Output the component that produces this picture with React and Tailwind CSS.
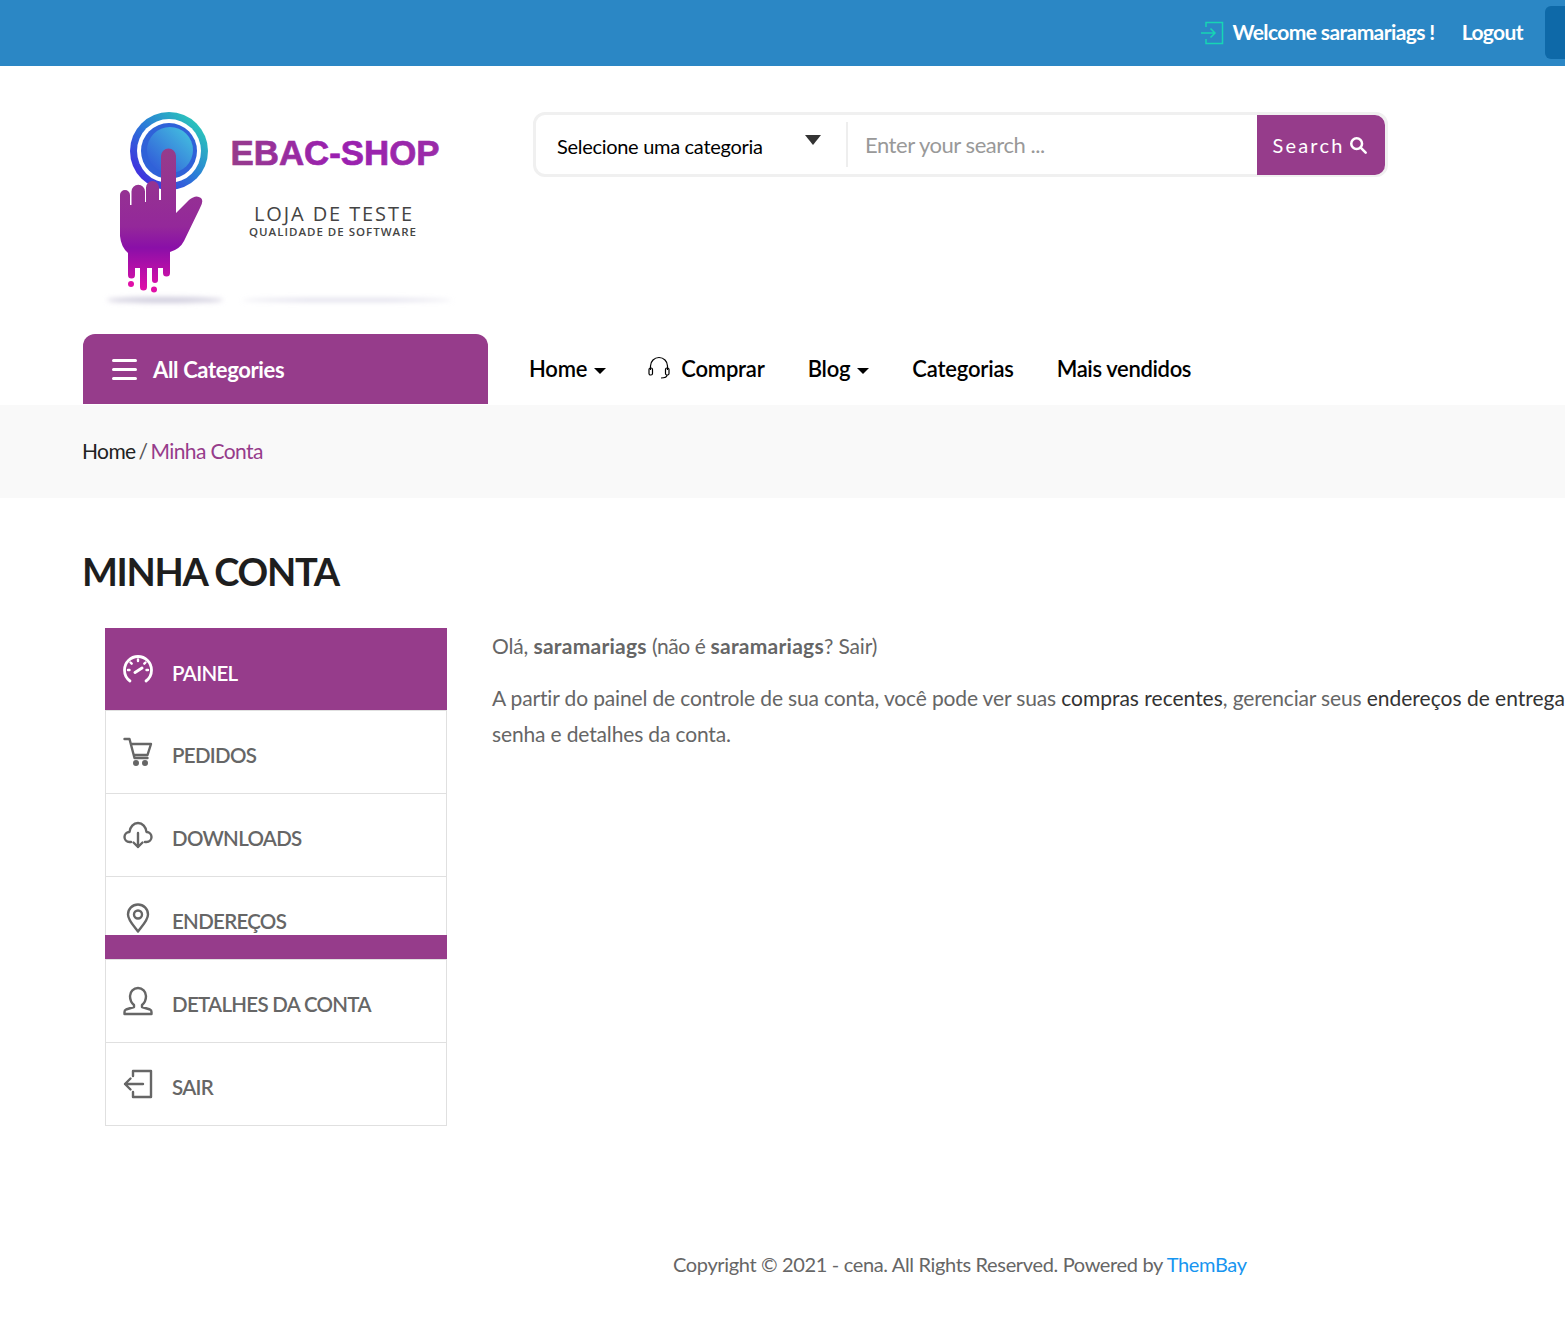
import React from "react";

const PURPLE = "bg-[#963c8b]";

const Logo = () => (
  <svg className="w-[360px] h-[205px] shrink-0" viewBox="100 105 360 205">
    <defs>
      <linearGradient id="ring" x1="0" y1="1" x2="1" y2="0">
        <stop offset="0" stopColor="#4a12e0" />
        <stop offset="0.5" stopColor="#2a7ad8" />
        <stop offset="1" stopColor="#2be0b0" />
      </linearGradient>
      <linearGradient id="inner" x1="0" y1="1" x2="1" y2="0">
        <stop offset="0" stopColor="#2f50d8" />
        <stop offset="1" stopColor="#45c8e0" />
      </linearGradient>
      <linearGradient id="hand" x1="0" y1="0" x2="0" y2="1">
        <stop offset="0" stopColor="#963c8b" />
        <stop offset="0.55" stopColor="#94289a" />
        <stop offset="0.7" stopColor="#8a0fa8" />
        <stop offset="1" stopColor="#e010a8" />
      </linearGradient>
      <linearGradient id="title" x1="0" y1="0" x2="1" y2="0">
        <stop offset="0" stopColor="#963c8b" />
        <stop offset="0.5" stopColor="#9a1fb0" />
        <stop offset="1" stopColor="#9a2ca8" />
      </linearGradient>
      <filter id="soft" x="-20%" y="-200%" width="140%" height="500%">
        <feGaussianBlur stdDeviation="2.500" />
      </filter>
    </defs>
    <circle cx="169" cy="151" r="39" fill="url(#ring)" />
    <circle cx="169" cy="151" r="32" fill="#fff" />
    <circle cx="169" cy="151" r="28" fill="#2f62d8" />
    <circle cx="170" cy="150" r="23" fill="url(#inner)" />
    <path
      d="M161 156a7.500 7.500 0 0 1 15 0V213L189 200Q196 194 201 198Q204 201 200 208L184 241Q180 249 170 252V273a3.500 3.500 0 0 1-7 0V268H158V280a3 3 0 0 1-6 0V268H147V287a3.500 3.500 0 0 1-7 0V268H135V275a3.500 3.500 0 0 1-7 0V253Q121 247 120 236V195a5 5 0 0 1 10 0V205H131.500V191.500a6.750 6.750 0 0 1 13.500 0V202H146V187.500a6.500 6.500 0 0 1 13 0V200H161Z"
      fill="url(#hand)"
    />
    <circle cx="131" cy="284" r="3" fill="#e010a8" />
    <circle cx="154" cy="289.500" r="3" fill="#e010a8" />
    <ellipse cx="165" cy="300" rx="58" ry="3" fill="#d0cede" filter="url(#soft)" />
    <ellipse cx="347" cy="300" rx="105" ry="1.500" fill="#d8d6e6" filter="url(#soft)" />
    <text x="230.500" y="165" fontFamily="'Liberation Sans', sans-serif" fontWeight="700" fontSize="35" textLength="209" lengthAdjust="spacingAndGlyphs" fill="url(#title)" stroke="url(#title)" strokeWidth="0.700">
      EBAC-SHOP
    </text>
    <text x="254" y="221" fontFamily="'Open Sans', sans-serif" fontSize="20" textLength="158" lengthAdjust="spacing" fill="#444">
      LOJA DE TESTE
    </text>
    <text x="249" y="236" fontFamily="'Open Sans', sans-serif" fontWeight="600" fontSize="11.500" textLength="167" lengthAdjust="spacing" fill="#444">
      QUALIDADE DE SOFTWARE
    </text>
  </svg>
);

const Stroke = ({ children, size = 30, className = "" }) => (
  <svg
    width={size}
    height={size}
    viewBox="0 0 30 30"
    fill="none"
    stroke="currentColor"
    strokeWidth="2.400"
    strokeLinecap="round"
    strokeLinejoin="round"
    className={className}
  >
    {children}
  </svg>
);

const GaugeIcon = () => (
  <Stroke>
    <path d="M7 27C3.500 24.500 1.500 20.500 1.500 16a13.500 13.500 0 0 1 27 0c0 4.500-2 8.500-5.500 11" strokeWidth="2.800" />
    <path d="M15 5.500v1.500M7.500 8.500l1.200 1.200M22.500 8.500l-1.200 1.200M5 16h1.500M23.500 16h1.500" />
    <path d="M12 18.500l7-4.500" strokeWidth="3" />
  </Stroke>
);

const CartIcon = () => (
  <Stroke>
    <path d="M1.500 2h5l5 19h13M8 7h20l-3.500 11H11" />
    <circle cx="13" cy="26" r="1.800" fill="currentColor" />
    <circle cx="22" cy="26" r="1.800" fill="currentColor" />
  </Stroke>
);

const CloudIcon = () => (
  <Stroke>
    <path d="M8 22H6.500C3.500 22 1.500 19.500 1.500 17s2-5 5-5C7 7 10.500 3 15 3s8 4 8.500 9c3 0 5 2.500 5 5s-2 5-5 5H22" />
    <path d="M15 13v14M10.500 22.500L15 27l4.500-4.500" />
  </Stroke>
);

const PinIcon = () => (
  <Stroke>
    <path d="M15 28.500C10 22 5 17 5 11.500a10 10 0 0 1 20 0C25 17 20 22 15 28.500Z" />
    <circle cx="15" cy="11.500" r="4" />
  </Stroke>
);

const UserIcon = () => (
  <Stroke>
    <path d="M11 19c-2.500-2-4-5-4-9a8 8 0 0 1 16 0c0 4-1.500 7-4 9v2l8 2.500c1 .4 1.500 1.200 1.500 2.500v2h-27v-2c0-1.300.5-2.100 1.500-2.500l8-2.500Z" />
  </Stroke>
);

const ExitIcon = () => (
  <Stroke>
    <path d="M10 7V2h18v26H10v-5" />
    <path d="M20 15H2M7.500 9.500L2 15l5.500 5.500" />
  </Stroke>
);

const menu = [
  { label: "PAINEL", icon: GaugeIcon, active: true },
  { label: "PEDIDOS", icon: CartIcon },
  { label: "DOWNLOADS", icon: CloudIcon },
  { label: "ENDEREÇOS", icon: PinIcon },
  { label: "DETALHES DA CONTA", icon: UserIcon },
  { label: "SAIR", icon: ExitIcon },
];

const Caret = () => (
  <span className="inline-block ml-[7px] align-middle w-0 h-0 border-x-[6px] border-x-transparent border-t-[6px] border-t-black" />
);

const SideMenu = () => (
  <ul className="relative w-[342px] shrink-0 border-x border-b border-[#e0e0e0]">
    {menu.map((item) => {
      const Icon = item.icon;
      return (
        <li
          key={item.label}
          className={
            item.active
              ? `h-[82px] -mx-px flex items-start pl-[18px] text-white ${PURPLE}`
              : "h-[83px] border-t border-[#e0e0e0] first:border-t-0 flex items-start pl-[17px] text-[#666]"
          }
        >
          <span className="mt-[26px] w-[32px] shrink-0">
            <Icon />
          </span>
          <span className={`${item.active ? "mt-[29px]" : "mt-[28px]"} ml-[17px] text-[20.5px] leading-[32px] tracking-[-0.7px] font-semibold`}>
            {item.label}
          </span>
        </li>
      );
    })}
    <li className={`absolute left-[-1px] right-[-1px] top-[307px] h-[24px] ${PURPLE}`} />
  </ul>
);

export default function App() {
  return (
    <div className="w-[1565px] h-[1333px] overflow-hidden bg-white flex flex-col font-['Lato','Liberation_Sans',sans-serif]">
      <header className="h-[66px] shrink-0 bg-[#2b87c5] flex items-center justify-end">
        <svg width="24" height="24" viewBox="0 0 24 24" fill="none" stroke="#17d5b4" strokeWidth="1.500" className="mr-[8px]">
          <path d="M6 6V1.500h16.500v21H6V18" />
          <path d="M1 12h14M10.500 7.500L15 12l-4.500 4.500" />
        </svg>
        <span className="-mt-[2px] text-white text-[21px] font-bold tracking-[-0.6px]">Welcome saramariags !</span>
        <span className="-mt-[2px] ml-[27px] text-white text-[21px] font-bold tracking-[-0.6px]">Logout</span>
        <span className="ml-[22px] w-[20px] h-[53px] -mt-px rounded-l-[6px] bg-[#0e69a8]" />
      </header>

      <div className="h-[268px] shrink-0 flex items-start">
        <div className="mt-[39px] ml-[100px]">
          <Logo />
        </div>
        <div className="mt-[46px] ml-[73px] w-[855px] h-[65px] flex items-center border-[3px] border-[#f0f0f0] rounded-[12px] bg-white">
          <div className="w-[312px] h-[45px] flex items-center justify-between pl-[21px] pr-[25px] border-r-2 border-[#eeeeee] text-black text-[20px] tracking-[-0.3px]">
            <span className="mt-[3px]">Selecione uma categoria</span>
            <span className="mb-[10px] w-0 h-0 border-x-[8px] border-x-transparent border-t-[10px] border-t-[#333]" />
          </div>
          <input
            className="flex-1 min-w-0 pl-[17px] outline-none text-[22px] tracking-[-0.45px] placeholder:text-[#999]"
            placeholder="Enter your search ..."
          />
          <button className={`w-[128px] h-[60px] pr-[3px] rounded-r-[10px] flex items-center justify-center gap-[4px] text-white text-[20px] tracking-[2.200px] ${PURPLE}`}>
            Search
            <svg width="18" height="18" viewBox="0 0 20 20" fill="none" stroke="#fff" strokeWidth="2.800" strokeLinecap="round">
              <circle cx="8.500" cy="8.500" r="6" />
              <path d="M13 13l5.500 5.500" />
            </svg>
          </button>
        </div>
      </div>

      <nav className="h-[70px] shrink-0 flex items-center pl-[83px]">
        <div className={`w-[405px] h-full rounded-t-[12px] flex items-center pl-[29px] text-white text-[22px] font-bold tracking-[-0.35px] ${PURPLE}`}>
          <span className="w-[25px] flex flex-col gap-[6px] mr-[16px]">
            <span className="h-[3px] bg-white rounded-full" />
            <span className="h-[3px] bg-white rounded-full" />
            <span className="h-[3px] bg-white rounded-full" />
          </span>
          All Categories
        </div>
        <div className="flex items-center ml-[41px] -mt-[2px] text-black text-[22px] font-semibold tracking-[-0.2px]">
          <span>
            Home
            <Caret />
          </span>
          <span className="ml-[41px] flex items-center">
            <svg width="24" height="24" viewBox="0 0 24 24" fill="none" stroke="#000" strokeWidth="1.200" className="mr-[10px]">
              <path d="M3.500 14V10a8.500 8.500 0 0 1 17 0v4" />
              <rect x="2" y="12" width="3.500" height="7" rx="1.500" />
              <rect x="18.500" y="12" width="3.500" height="7" rx="1.500" />
              <path d="M20 19c0 2-2.500 3-6 3" />
            </svg>
            Comprar
          </span>
          <span className="ml-[43px]">
            Blog
            <Caret />
          </span>
          <span className="ml-[43px]">Categorias</span>
          <span className="ml-[43px] tracking-[-0.35px]">Mais vendidos</span>
        </div>
      </nav>

      <div className="h-[93px] shrink-0 mt-px bg-[#f9f9f9] flex items-center pl-[82px] pb-[1px] text-[21px] tracking-[-0.6px] text-[#222]">
        Home<span className="mx-[3px] text-[#555]">/</span>
        <span className="text-[#963c8b]">Minha Conta</span>
      </div>

      <main className="flex-1 pl-[83px]">
        <h1 className="mt-[48px] -ml-px text-[38px] leading-[50px] font-bold text-[#1e1e1e] tracking-[-1.3px]">MINHA CONTA</h1>
        <div className="mt-[32px] ml-[22px] flex items-start">
          <SideMenu />
          <div className="ml-[45px] text-[21px] leading-[36px] text-[#666] tracking-[-0.15px] whitespace-nowrap">
            <p>
              Olá, <strong className="font-bold tracking-[0.25px]">saramariags</strong>{" "}
              <span className="tracking-[-0.45px]">(não é</span>{" "}
              <strong className="font-bold tracking-[0.25px]">saramariags</strong>? Sair)
            </p>
            <p className="mt-[16px]">
              A partir do painel de controle de sua conta, você pode ver suas{" "}
              <span className="text-[#333] tracking-normal">compras recentes</span>, gerenciar seus{" "}
              <span className="text-[#333] tracking-normal">endereços de entrega</span>
              <br />
              senha e detalhes da conta.
            </p>
          </div>
        </div>
        <footer className="mt-[123px] pl-[590px] text-[20px] leading-[30px] text-[#666] tracking-[-0.35px] whitespace-nowrap">
          Copyright © 2021 - cena. All Rights Reserved. Powered by <span className="text-[#1795f0]">ThemBay</span>
        </footer>
      </main>
    </div>
  );
}
